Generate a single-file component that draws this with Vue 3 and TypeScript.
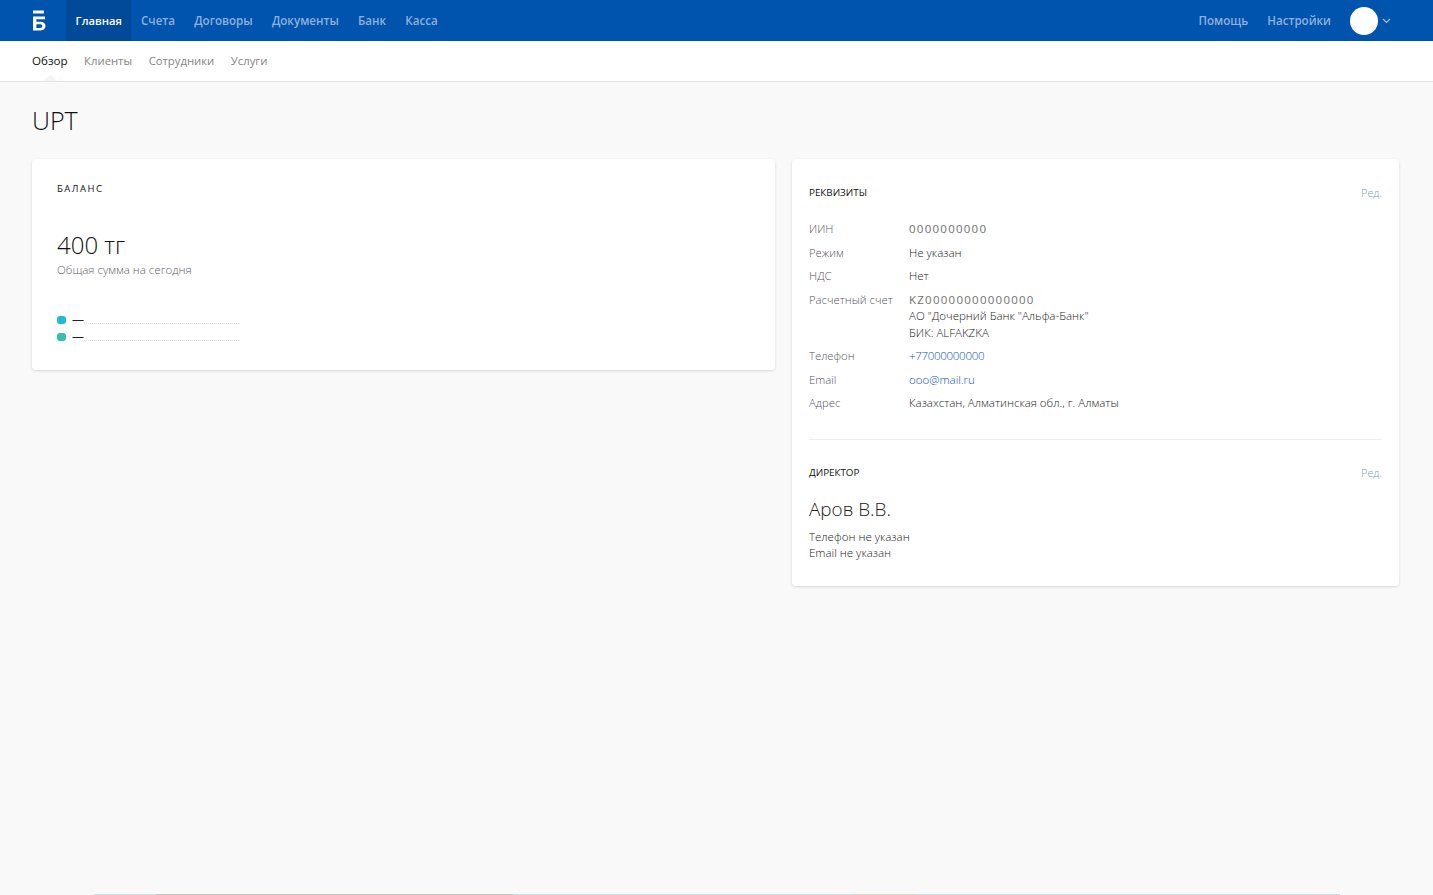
<script setup lang="ts">
type Row = { label: string; lines: string[]; wide?: boolean; link?: boolean; tight?: boolean };

const mainNav = ["Главная", "Счета", "Договоры", "Документы", "Банк", "Касса"];
const subNav = ["Обзор", "Клиенты", "Сотрудники", "Услуги"];
const legend = ["#22b8d6", "#36bfb0"];

const rows: Row[] = [
  { label: "ИИН", lines: ["0000000000"], wide: true },
  { label: "Режим", lines: ["Не указан"] },
  { label: "НДС", lines: ["Нет"] },
  {
    label: "Расчетный счет",
    lines: ["KZ00000000000000", 'АО "Дочерний Банк "Альфа-Банк"', "БИК: ALFAKZKA"],
    wide: true,
  },
  { label: "Телефон", lines: ["+77000000000"], link: true, tight: true },
  { label: "Email", lines: ["ooo@mail.ru"], link: true },
  { label: "Адрес", lines: ["Казахстан, Алматинская обл., г. Алматы"] },
];
</script>

<template>
  <div class="page">
    <header class="topbar">
      <div class="logo">
        <svg width="14" height="21" viewBox="0 0 14 21" aria-hidden="true">
          <path d="M1 0.5h11v3H1z M1 6.5h12v2.8H4.4v2.4H8.5c3.2 0 5 1.6 5 4.4 0 2.8-1.9 4.4-5.1 4.4H1z M4.4 14.2v3.8h3.7c1.4 0 2.2-.7 2.2-1.9s-.8-1.9-2.2-1.9z" fill="#fff" fill-rule="evenodd" />
        </svg>
      </div>
      <nav class="main-nav">
        <a v-for="(item, i) in mainNav" :key="item" :class="{ active: i === 0 }">{{ item }}</a>
      </nav>
      <div class="top-right">
        <a>Помощь</a>
        <a>Настройки</a>
        <span class="avatar" />
        <svg class="chevron" width="9" height="6" viewBox="0 0 9 6" aria-hidden="true">
          <path d="M1 1l3.5 3.5L8 1" fill="none" stroke="#a9c2e2" stroke-width="1.2" />
        </svg>
      </div>
    </header>

    <nav class="sub-nav">
      <a v-for="(item, i) in subNav" :key="item" :class="{ active: i === 0 }">{{ item }}</a>
    </nav>

    <main class="content">
      <h1>UPT</h1>
      <div class="columns">
        <section class="card balance">
          <h2 class="balance-title">БАЛАНС</h2>
          <div class="amount">400 тг</div>
          <div class="amount-note">Общая сумма на сегодня</div>
          <ul class="legend">
            <li v-for="color in legend" :key="color">
              <span class="dot" :style="{ background: color }" />
              <span class="dash">—</span>
              <span class="leader" />
            </li>
          </ul>
        </section>

        <section class="card details">
          <div class="card-head">
            <h2>РЕКВИЗИТЫ</h2>
            <a class="edit">Ред.</a>
          </div>
          <dl class="req-list">
            <div v-for="row in rows" :key="row.label" class="req-row">
              <dt>{{ row.label }}</dt>
              <dd :class="{ link: row.link, tight: row.tight }">
                <div v-for="(line, i) in row.lines" :key="line" :class="{ spaced: row.wide && i === 0 }">{{ line }}</div>
              </dd>
            </div>
          </dl>
          <hr />
          <div class="card-head">
            <h2>ДИРЕКТОР</h2>
            <a class="edit">Ред.</a>
          </div>
          <div class="director">Аров В.В.</div>
          <div class="contact">Телефон не указан</div>
          <div class="contact">Email не указан</div>
        </section>
      </div>
    </main>

    <div class="bottom-strip" />
  </div>
</template>

<style scoped>
.page {
  height: 895px;
  overflow: hidden;
  display: flex;
  flex-direction: column;
  background: #f9f9f9;
  font-family: "Open Sans", "Noto Sans", sans-serif;
  color: #333;
}

.topbar {
  height: 41px;
  flex: none;
  display: flex;
  align-items: stretch;
  background: #0054ad;
  padding-left: 32px;
  padding-right: 42px;
}

.logo {
  width: 34px;
  display: flex;
  align-items: center;
}

.main-nav {
  display: flex;
}

.main-nav a {
  display: flex;
  align-items: center;
  padding: 0 9.6px;
  font-size: 11.6px;
  font-weight: 600;
  color: #8fb0dc;
}

.main-nav a.active {
  background: #004a99;
  color: #fff;
  font-size: 11.2px;
}

.top-right {
  margin-left: auto;
  display: flex;
  align-items: center;
  font-size: 11.6px;
  font-weight: 600;
  color: #8fb0dc;
}

.top-right a {
  margin-right: 19px;
}

.avatar {
  width: 28px;
  height: 28px;
  border-radius: 50%;
  background: #fff;
}

.chevron {
  margin-left: 4px;
}

.sub-nav {
  height: 40px;
  flex: none;
  display: flex;
  align-items: center;
  gap: 16.5px;
  padding-left: 32px;
  background: #fff;
  border-bottom: 1px solid #e4e4e4;
  font-size: 11.3px;
  line-height: 38px;
  color: #858585;
}

.sub-nav a.active {
  position: relative;
  color: #111;
  font-size: 11.6px;
}

.sub-nav a.active::after {
  content: "";
  position: absolute;
  left: 11px;
  bottom: -1px;
  border-style: solid;
  border-width: 0 7px 6px;
  border-color: transparent transparent #f5f5f5;
}

.content {
  flex: 1;
  padding: 0 34px 0 32px;
}

h1 {
  margin: 20px 0 21px;
  font-size: 25px;
  line-height: 36px;
  font-weight: 300;
  color: #111;
}

.columns {
  display: grid;
  grid-template-columns: 743px 607px;
  gap: 17px;
  align-items: start;
}

.card {
  box-sizing: border-box;
  background: #fff;
  border-radius: 4px;
  box-shadow: 0 1px 3px rgba(0, 0, 0, 0.14);
}

.balance {
  height: 211px;
  padding: 24px 25px 0;
}

.balance-title {
  margin: 0;
  font-size: 9.5px;
  line-height: 12px;
  font-weight: 400;
  letter-spacing: 1.5px;
  color: #111;
}

.amount {
  margin-top: 33px;
  font-size: 24px;
  line-height: 34px;
  font-weight: 300;
  color: #111;
}

.amount-note {
  font-size: 11.5px;
  line-height: 16px;
  font-weight: 300;
  color: #5f5f6a;
}

.legend {
  list-style: none;
  margin: 33px 0 0;
  padding: 0;
  width: 182px;
}

.legend li {
  height: 17px;
  display: flex;
  align-items: center;
}

.dot {
  width: 9px;
  height: 8px;
  border-radius: 3px;
}

.dash {
  margin-left: 6px;
  font-size: 12px;
  color: #222;
}

.leader {
  flex: 1;
  margin-top: 7px;
  border-bottom: 1px dotted #e0e0e0;
}

.details {
  height: 427px;
  padding: 25px 17px 0;
}

.card-head {
  display: flex;
  justify-content: space-between;
  align-items: center;
  height: 16px;
}

.card-head h2 {
  margin: 0;
  font-size: 9.8px;
  font-weight: 500;
  color: #111;
}

.edit {
  font-size: 11px;
  font-weight: 300;
  color: #7a9fb8;
}

.req-list {
  margin: 21px 0 0;
}

.req-row {
  display: flex;
  margin-bottom: 7px;
  font-size: 11.5px;
  line-height: 16.5px;
}

dt {
  width: 100px;
  flex: none;
  font-size: 11.3px;
  font-weight: 300;
  color: #55555f;
}

dd {
  margin: 0;
  font-weight: 300;
  color: #1c1c1c;
}

dd.link {
  color: #0f4fd0;
}

dd.tight {
  letter-spacing: -0.3px;
}

.spaced {
  letter-spacing: 1.25px;
  font-weight: 400;
  color: #707070;
}

hr {
  margin: 27px 0 25px;
  border: 0;
  border-top: 1px solid #efefef;
}

.director {
  margin-top: 16px;
  font-size: 18.9px;
  line-height: 24px;
  font-weight: 300;
  color: #222;
}

.director + .contact {
  margin-top: 8px;
}

.contact {
  font-size: 11.5px;
  line-height: 16px;
  font-weight: 300;
  color: #1c1c1c;
}

.bottom-strip {
  flex: none;
  height: 1px;
  margin: 0 93px 0 94px;
  background: linear-gradient(90deg, #cfdde0 0 5%, #c4c4c0 5% 33.7%, #cfdde0 33.7% 61%, #d8d6d0 61% 66%, #cfdde0 66% 100%);
}
</style>

<style>
body {
  margin: 0;
}
</style>
